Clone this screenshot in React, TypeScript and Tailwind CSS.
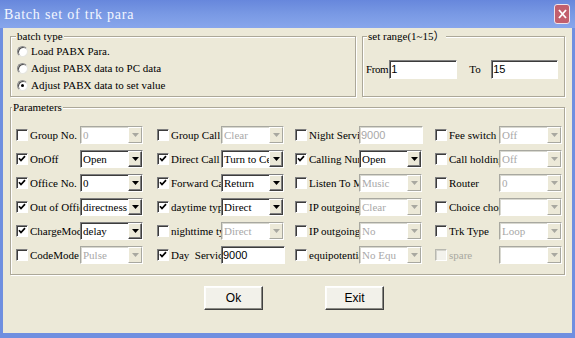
import React from "react";

const serif = "font-['Liberation_Serif','Noto_Sans_CJK_SC',serif]";
const sans = "font-['Liberation_Sans',Arial,sans-serif]";

function Check({ checked, disabled }: { checked?: boolean; disabled?: boolean }) {
  return (
    <span
      className={`w-[12px] h-[12px] shrink-0 flex items-center justify-center border ${
        disabled
          ? "border-t-[#b8b8b0] border-l-[#b8b8b0] border-b-white border-r-white bg-[#f3f2ec] shadow-[inset_1px_1px_0_#d4d3cc]"
          : "border-t-[#7f7f7f] border-l-[#7f7f7f] border-b-white border-r-white bg-white shadow-[inset_1px_1px_0_#3c3c3c]"
      }`}
    >
      {checked && (
        <svg width="8" height="8" viewBox="0 0 8 8">
          <polyline points="1,3.3 3,5.5 7,1.2" fill="none" stroke="#000" strokeWidth="1.7" />
        </svg>
      )}
    </span>
  );
}

function Arrow({ disabled }: { disabled?: boolean }) {
  return (
    <svg width="7" height="4" viewBox="0 0 7 4">
      <polygon points="0,0 7,0 3.5,4" fill={disabled ? "#a8a8a0" : "#000"} />
    </svg>
  );
}

function Sel({ value, disabled, w = 63 }: { value: string; disabled?: boolean; w?: number }) {
  return (
    <div
      style={{ width: w }}
      className={`h-[18px] shrink-0 flex bg-white border ${
        disabled
          ? "border-t-[#a8a8a0] border-l-[#a8a8a0] border-b-white border-r-white shadow-[inset_1px_1px_0_#d8d8d0]"
          : "border-t-[#7f7f7f] border-l-[#7f7f7f] border-b-white border-r-white shadow-[inset_1px_1px_0_#3c3c3c]"
      }`}
    >
      <span
        className={`flex-1 min-w-0 overflow-hidden whitespace-nowrap pl-[2px] pt-[1px] leading-[15px] text-[11px] ${serif} ${
          disabled ? "text-[#a8a8a8]" : "text-black"
        }`}
      >
        {value}
      </span>
      <span
        className={`w-[14px] h-full shrink-0 flex items-center justify-center bg-[#ece9d8] border ${
          disabled
            ? "border-t-white border-l-white border-r-[#a8a8a0] border-b-[#a8a8a0]"
            : "border-t-white border-l-white border-r-[#404040] border-b-[#404040] shadow-[inset_-1px_-1px_0_#808080]"
        }`}
      >
        <Arrow disabled={disabled} />
      </span>
    </div>
  );
}

function TextBox({ value, disabled, w = 65, h = 18 }: { value: string; disabled?: boolean; w?: number; h?: number }) {
  return (
    <div
      style={{ width: w, height: h }}
      className={`shrink-0 bg-white border overflow-hidden whitespace-nowrap pl-[1px] flex items-center text-[11px] ${sans} ${
        disabled
          ? "border-t-[#a8a8a0] border-l-[#a8a8a0] border-b-white border-r-white shadow-[inset_1px_1px_0_#d8d8d0] text-[#a8a8a8]"
          : "border-t-[#7f7f7f] border-l-[#7f7f7f] border-b-white border-r-white shadow-[inset_1px_1px_0_#3c3c3c] text-black"
      }`}
    >
      {value}
    </div>
  );
}

type Item = {
  label: string;
  checked?: boolean;
  chkDisabled?: boolean;
  labelDisabled?: boolean;
  value: string;
  disabled?: boolean;
  text?: boolean;
};

const cols: Item[][] = [
  [
    { label: "Group No.", value: "0", disabled: true },
    { label: "OnOff", checked: true, value: "Open" },
    { label: "Office No.", checked: true, value: "0" },
    { label: "Out of Office", checked: true, value: "directness" },
    { label: "ChargeMode", checked: true, value: "delay" },
    { label: "CodeMode", value: "Pulse", disabled: true },
  ],
  [
    { label: "Group Call", value: "Clear", disabled: true },
    { label: "Direct Call", checked: true, value: "Turn to Center" },
    { label: "Forward Call", checked: true, value: "Return" },
    { label: "daytime type", checked: true, value: "Direct" },
    { label: "nighttime type", value: "Direct", disabled: true },
    { label: "Day\u00a0\u00a0Service", checked: true, value: "9000", text: true },
  ],
  [
    { label: "Night Service", value: "9000", disabled: true, text: true },
    { label: "Calling Number", checked: true, value: "Open" },
    { label: "Listen To Music", value: "Music", disabled: true },
    { label: "IP outgoing", value: "Clear", disabled: true },
    { label: "IP outgoing", value: "No", disabled: true },
    { label: "equipotential", value: "No Equ", disabled: true },
  ],
  [
    { label: "Fee switch", value: "Off", disabled: true },
    { label: "Call holding", value: "Off", disabled: true },
    { label: "Router", value: "0", disabled: true },
    { label: "Choice chord", value: "", disabled: true },
    { label: "Trk Type", value: "Loop", disabled: true },
    { label: "spare", value: "", disabled: true, chkDisabled: true, labelDisabled: true },
  ],
];

function Row({ it }: { it: Item }) {
  return (
    <div className="h-[18px] flex items-center">
      <Check checked={it.checked} disabled={it.chkDisabled} />
      <span
        className={`ml-[2px] w-[50px] shrink-0 overflow-hidden whitespace-nowrap text-[11px] leading-[18px] ${serif} ${
          it.labelDisabled ? "text-[#a8a8a0]" : "text-black"
        }`}
      >
        {it.label}
      </span>
      {it.text ? <TextBox value={it.value} disabled={it.disabled} w={64} /> : <Sel value={it.value} disabled={it.disabled} />}
    </div>
  );
}

function Radio({ checked }: { checked?: boolean }) {
  return (
    <span className="w-[11px] h-[11px] shrink-0 rounded-full bg-white border border-t-[#8a8a8a] border-l-[#8a8a8a] border-b-[#e6e6e0] border-r-[#e6e6e0] shadow-[inset_1px_1px_0_#505050] flex items-center justify-center">
      {checked && <span className="w-[3px] h-[3px] rounded-full bg-black" />}
    </span>
  );
}

const groupBox = "relative shrink-0 border border-[#aca899] shadow-[1px_1px_0_#fff,inset_1px_1px_0_#fff]";

export default function App() {
  return (
    <div className="w-[575px] h-[338px] bg-[#6f8fe0] flex flex-col overflow-hidden">
      <div className="h-[28px] shrink-0 bg-linear-to-b from-[#6787dc] via-[#7999e4] to-[#88a6ec] flex items-center justify-between pl-[4px] pr-[5px]">
        <span className={`text-[14px] tracking-[0.8px] text-[#f4f7ff] ${serif}`}>Batch set of trk para</span>
        <span className="w-[16px] h-[20px] rounded-[3px] bg-[#c25f6d] border border-[#efe3ea] flex items-center justify-center">
          <svg width="9" height="10" viewBox="0 0 9 10">
            <path d="M1 1 L8 9 M8 1 L1 9" stroke="#fff" strokeWidth="1.8" />
          </svg>
        </span>
      </div>

      <div className="flex-1 mx-[3px] mb-[5px] bg-[#ece9d8] flex flex-col">
        <div className="flex pt-[8px] pl-[7px] gap-[6px]">
          <div className={`${groupBox} w-[346px] h-[61px] flex flex-col pt-[6px] pl-[6px]`}>
            <span className={`absolute -top-[8px] left-[5px] px-[1px] bg-[#ece9d8] text-[11px] leading-[14px] text-black ${serif}`}>
              batch type
            </span>
            {[
              ["Load PABX Para.", false],
              ["Adjust PABX data to PC data", false],
              ["Adjust PABX data to set value", true],
            ].map(([t, c]) => (
              <div key={t as string} className="h-[17px] flex items-center gap-[3px]">
                <Radio checked={c as boolean} />
                <span className={`text-[11px] text-black ${serif}`}>{t as string}</span>
              </div>
            ))}
          </div>

          <div className={`${groupBox} w-[203px] h-[61px] flex items-start pt-[23px] pl-[3px]`}>
            <span className={`absolute -top-[8px] left-[4px] px-[1px] bg-[#ece9d8] text-[11px] leading-[14px] text-black ${serif}`}>
              set range(1~15）
            </span>
            <span className={`h-[19px] flex items-center text-[11px] text-black tracking-[-0.4px] pr-[1px] ${serif}`}>From</span>
            <TextBox value="1" w={68} h={19} />
            <span className={`ml-[12px] w-[22px] h-[19px] flex items-center text-[11px] text-black ${serif}`}>To</span>
            <TextBox value="15" w={67} h={19} />
          </div>
        </div>

        <div className={`${groupBox} mt-[10px] ml-[7px] w-[555px] h-[168px] pt-[18px] pl-[5px]`}>
          <span className={`absolute -top-[8px] left-[1px] px-[1px] bg-[#ece9d8] text-[11px] leading-[14px] text-black ${serif}`}>
            Parameters
          </span>
          <div className="grid grid-cols-[141px_138px_140px_130px]">
            {cols.map((col, ci) => (
              <div key={ci} className="flex flex-col gap-[6px]">
                {col.map((it, ri) => (
                  <Row key={ri} it={it} />
                ))}
              </div>
            ))}
          </div>
        </div>

        <div className="mt-[11px] flex pl-[201px] gap-[62px]">
          {["Ok", "Exit"].map((b) => (
            <button
              key={b}
              className={`w-[59px] h-[24px] bg-[#f2f1ea] border border-t-white border-l-white border-r-[#404040] border-b-[#404040] shadow-[inset_-1px_-1px_0_#8a8a84,inset_1px_1px_0_#fdfdfb] text-[12px] text-black ${sans}`}
            >
              {b}
            </button>
          ))}
        </div>
      </div>
    </div>
  );
}
